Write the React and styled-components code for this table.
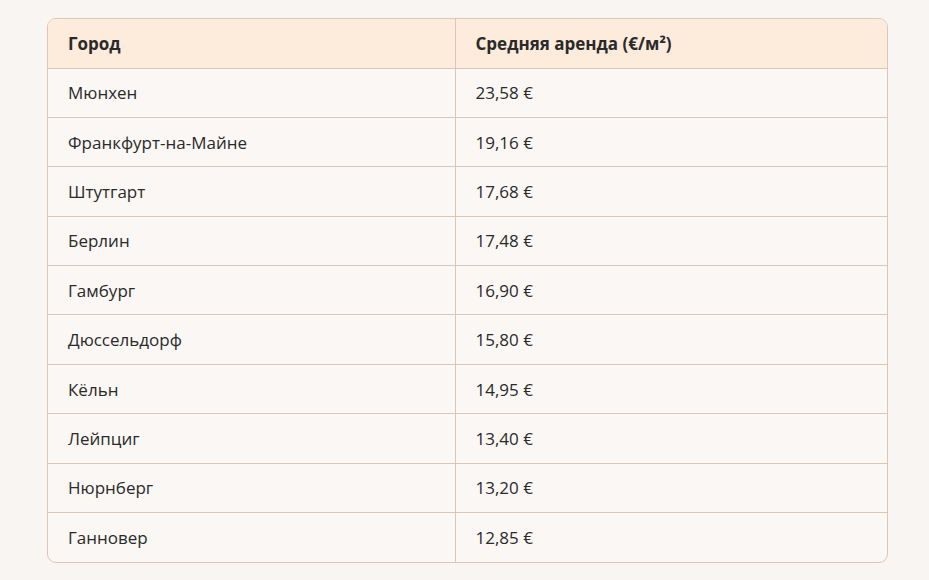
import React from 'react';
import styled, { createGlobalStyle } from 'styled-components';

const GlobalStyle = createGlobalStyle`
  html, body {
    margin: 0;
    padding: 0;
    background: #f8f5f2;
  }
  body {
    font-family: "Open Sans", "Noto Sans", sans-serif;
    color: #2a2a2a;
  }
`;

const Page = styled.div`
  padding: 18px 41px 18px 47px;
`;

const TableWrap = styled.div`
  border: 1px solid #dcc6b6;
  border-radius: 9px;
  overflow: hidden;
  background: #fbf7f4;
`;

const Table = styled.table`
  width: 100%;
  border-collapse: collapse;
  font-size: 17px;
`;

const HeadCell = styled.th`
  background: #fdebdc;
  text-align: left;
  font-weight: 700;
  height: 49px;
  padding: 0 20px;
  border-bottom: 1px solid #dcc6b6;
  border-left: ${p => (p.$first ? 'none' : '1px solid #dcc6b6')};
  width: ${p => (p.$first ? '407px' : 'auto')};
  box-sizing: border-box;
`;

const Row = styled.tr`
  & + & td {
    border-top: 1px solid #dcc6b6;
  }
`;

const Cell = styled.td`
  height: 49.4px;
  padding: 0 20px;
  border-left: ${p => (p.$first ? 'none' : '1px solid #dcc6b6')};
  font-weight: ${p => (p.$strong ? 500 : 400)};
  box-sizing: border-box;
`;

const rows = [
  ['Мюнхен', '23,58 €'],
  ['Франкфурт-на-Майне', '19,16 €'],
  ['Штутгарт', '17,68 €'],
  ['Берлин', '17,48 €'],
  ['Гамбург', '16,90 €'],
  ['Дюссельдорф', '15,80 €'],
  ['Кёльн', '14,95 €'],
  ['Лейпциг', '13,40 €'],
  ['Нюрнберг', '13,20 €'],
  ['Ганновер', '12,85 €'],
];

export default function App() {
  return (
    <Page>
      <GlobalStyle />
      <TableWrap>
        <Table>
          <thead>
            <tr>
              <HeadCell $first>Город</HeadCell>
              <HeadCell>Средняя аренда (€/м²)</HeadCell>
            </tr>
          </thead>
          <tbody>
            {rows.map(([city, rent]) => (
              <Row key={city}>
                <Cell $first>{city}</Cell>
                <Cell $strong>{rent}</Cell>
              </Row>
            ))}
          </tbody>
        </Table>
      </TableWrap>
    </Page>
  );
}
